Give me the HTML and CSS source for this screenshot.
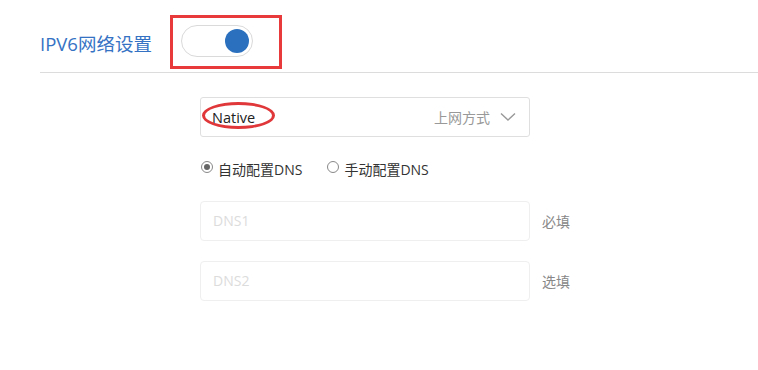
FILE: index.html
```html
<!DOCTYPE html>
<html>
<head>
<meta charset="utf-8">
<link rel="stylesheet" href="styles.css">
</head>
<body>
<div class="page">
  <div class="header">
    <div class="title">IPV6网络设置</div>
    <div class="mark-box">
      <div class="toggle"><span class="knob"></span></div>
    </div>
  </div>
  <div class="form">
    <div class="select">
      <span class="value">Native<span class="ellipse"></span></span>
      <span class="hint">上网方式</span>
      <svg class="chev" width="16" height="10" viewBox="0 0 16 10"><path d="M1 1.5 L8 8 L15 1.5" fill="none" stroke="#999" stroke-width="1.4"/></svg>
    </div>
    <div class="radios">
      <label class="radio"><span class="dot checked"></span>自动配置DNS</label>
      <label class="radio"><span class="dot"></span>手动配置DNS</label>
    </div>
    <div class="row">
      <div class="input">DNS1</div>
      <span class="note">必填</span>
    </div>
    <div class="row">
      <div class="input">DNS2</div>
      <span class="note">选填</span>
    </div>
  </div>
</div>
</body>
</html>
```
FILE: styles.css
```css
* { box-sizing: border-box; }
html, body { margin: 0; padding: 0; background: #fff; }
body { font-family: "Open Sans", "Noto Sans CJK SC", sans-serif; }
.page { width: 758px; height: 370px; }
.header {
  display: flex;
  align-items: flex-start;
  margin-left: 40px;
  padding-top: 15px;
  height: 73px;
  border-bottom: 1px solid #dcdcdc;
}
.title {
  font-size: 18.5px;
  color: #3572c4;
  margin-top: 18px;
  line-height: 22px;
  width: 130px;
}
.mark-box {
  width: 112px;
  height: 54px;
  border: 3px solid #e8393b;
  padding: 7px 0 0 8px;
}
.toggle {
  position: relative;
  width: 72px;
  height: 32px;
  border: 1px solid #dadada;
  border-radius: 16px;
  background: #fff;
}
.knob {
  position: absolute;
  left: 43px;
  top: 3px;
  width: 24px;
  height: 24px;
  border-radius: 50%;
  background: #2a70be;
}
.form {
  margin-left: 200px;
  padding-top: 24px;
  width: 400px;
}
.select {
  display: flex;
  align-items: center;
  width: 330px;
  height: 40px;
  border: 1px solid #dfdfdf;
  border-radius: 3px;
  padding: 0 13px 0 11px;
}
.value {
  position: relative;
  font-size: 14.5px;
  color: #222;
  flex: 1;
}
.ellipse {
  position: absolute;
  left: -10px;
  top: -6px;
  width: 73px;
  height: 27px;
  border: 3px solid #e0383a;
  border-radius: 50%;
}
.hint {
  font-size: 14px;
  color: #999;
  margin-right: 10px;
}
.chev { display: block; }
.radios {
  display: flex;
  height: 64px;
  align-items: center;
  gap: 24px;
  font-size: 14px;
  color: #333;
}
.radio { display: flex; align-items: center; }
.dot {
  width: 12px;
  height: 12px;
  border: 1px solid #888;
  border-radius: 50%;
  margin-right: 5px;
  margin-left: 1px;
  position: relative;
  top: -2px;
  background: #fff;
}
.dot.checked::after {
  content: "";
  position: absolute;
  left: 2px; top: 2px;
  width: 6px; height: 6px;
  border-radius: 50%;
  background: #666;
}
.row {
  display: flex;
  align-items: center;
  margin-bottom: 20px;
}
.input {
  width: 330px;
  height: 40px;
  border: 1px solid #efefef;
  border-radius: 4px;
  padding-left: 12px;
  line-height: 38px;
  font-size: 14px;
  color: #dcdcdc;
}
.note {
  margin-left: 12px;
  font-size: 14px;
  color: #888;
}
```
